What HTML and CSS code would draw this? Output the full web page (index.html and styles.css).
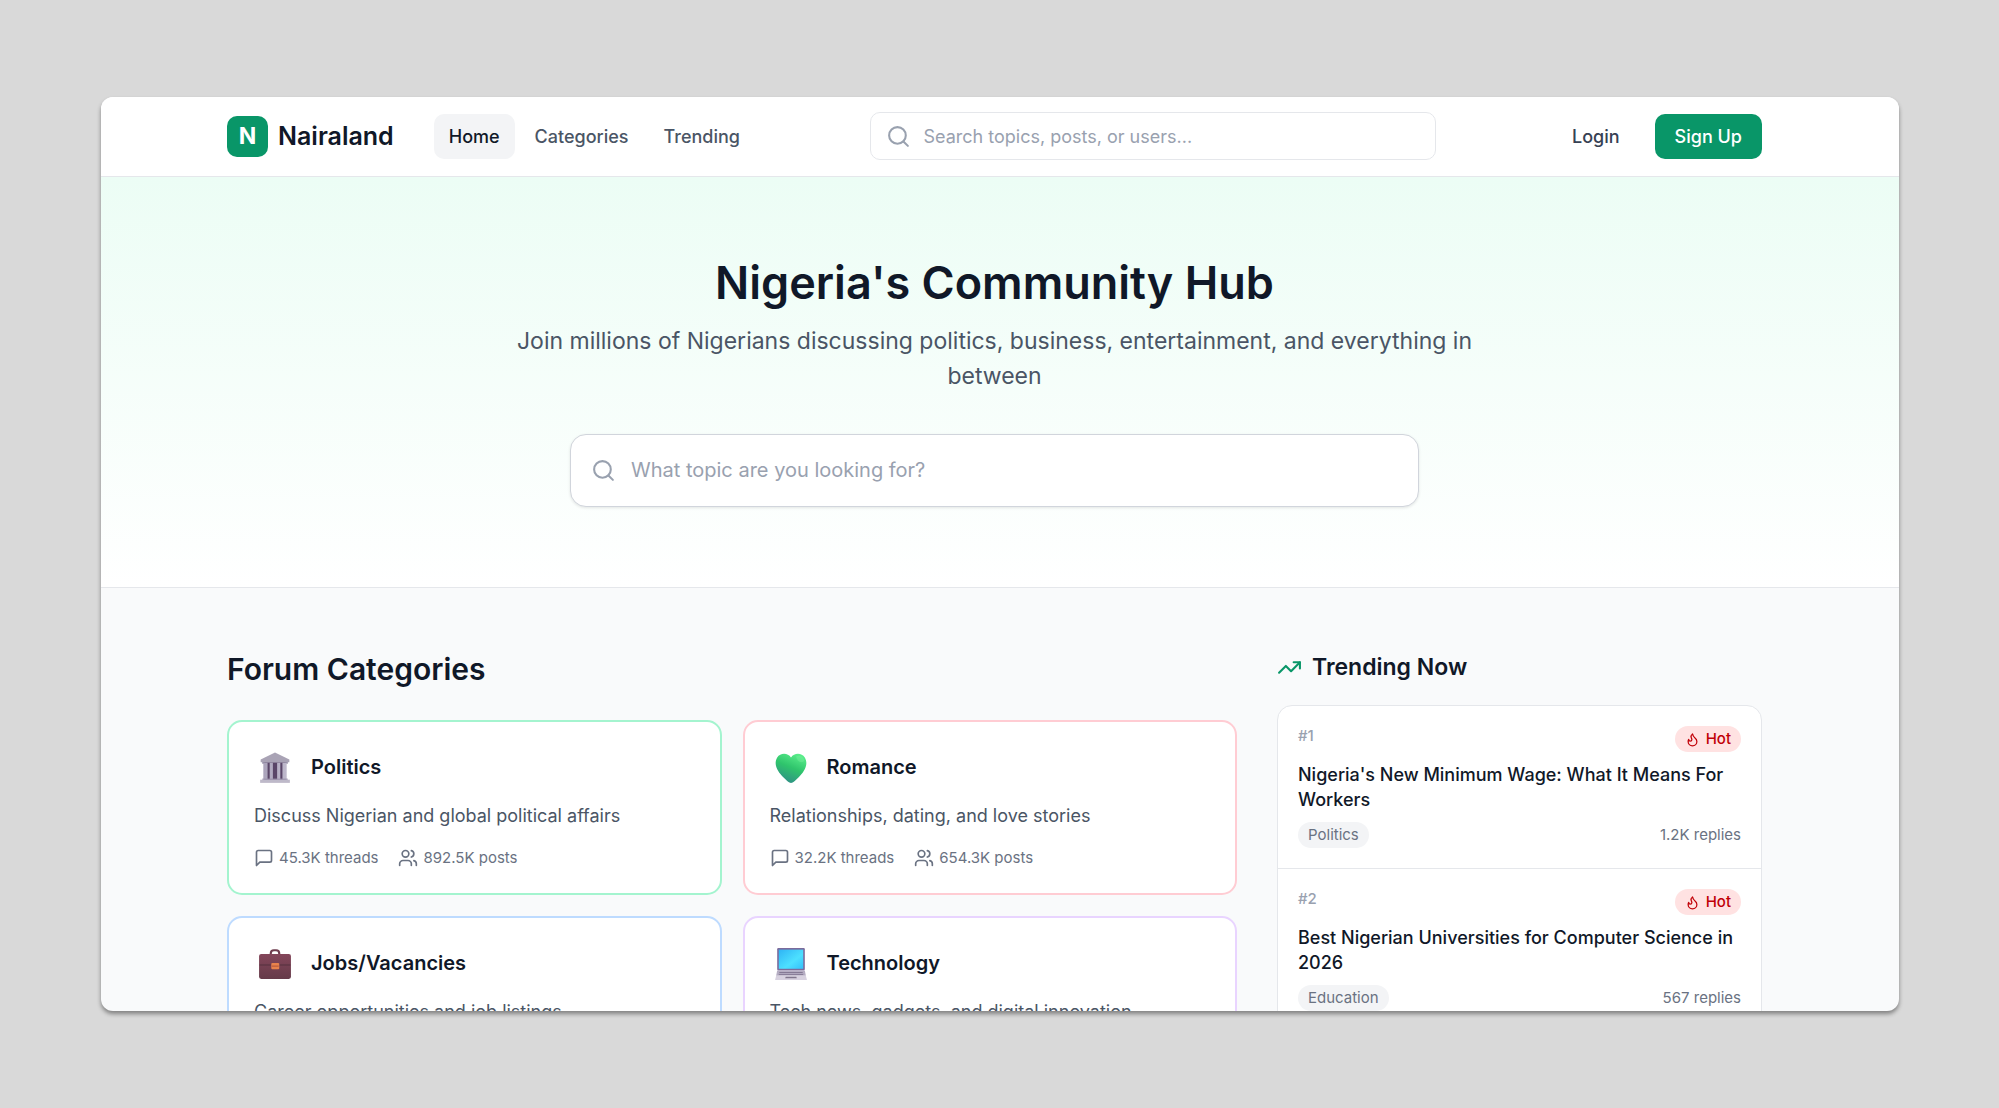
FILE: index.html
```html
<!DOCTYPE html>
<html lang="en">
<head>
<meta charset="utf-8">
<meta name="viewport" content="width=device-width, initial-scale=1">
<title>Nairaland</title>
<link rel="stylesheet" href="styles.css">
</head>
<body>
<svg class="sprite" aria-hidden="true">
  <defs>
    <linearGradient id="heart-fill" x1="0.8" y1="0" x2="0.35" y2="1">
      <stop offset="0" stop-color="#5cf08c"/>
      <stop offset="0.5" stop-color="#2fc46c"/>
      <stop offset="1" stop-color="#2f8f86"/>
    </linearGradient>
    <linearGradient id="screen-fill" x1="0" y1="0" x2="1" y2="1">
      <stop offset="0" stop-color="#2fb4f5"/>
      <stop offset="0.6" stop-color="#4de0ff"/>
      <stop offset="1" stop-color="#35c0fa"/>
    </linearGradient>
    <linearGradient id="case-fill" x1="0" y1="0" x2="0" y2="1">
      <stop offset="0" stop-color="#84465a"/>
      <stop offset="1" stop-color="#653a49"/>
    </linearGradient>
    <linearGradient id="column-fill" x1="0" y1="0" x2="1" y2="0">
      <stop offset="0" stop-color="#aaa3ba"/>
      <stop offset="1" stop-color="#bfb9cc"/>
    </linearGradient>
  </defs>
  <symbol id="search" viewBox="0 0 24 24"><circle cx="11" cy="11" r="8"/><path d="m21 21-4.3-4.3"/></symbol>
  <symbol id="thread" viewBox="0 0 24 24"><path d="M21 15a2 2 0 0 1-2 2H7l-4 4V5a2 2 0 0 1 2-2h14a2 2 0 0 1 2 2z"/></symbol>
  <symbol id="users" viewBox="0 0 24 24"><path d="M16 21v-2a4 4 0 0 0-4-4H6a4 4 0 0 0-4 4v2"/><circle cx="9" cy="7" r="4"/><path d="M22 21v-2a4 4 0 0 0-3-3.87"/><path d="M16 3.13a4 4 0 0 1 0 7.75"/></symbol>
  <symbol id="trend" viewBox="0 0 24 24"><path d="m22 7-8.5 8.5-5-5L2 17"/><path d="M16 7h6v6"/></symbol>
  <symbol id="flame" viewBox="0 0 24 24"><path d="M8.5 14.5A2.5 2.5 0 0 0 11 12c0-1.38-.5-2-1-3-1.072-2.143-.224-4.054 2-6 .5 2.5 2 4.9 4 6.5 2 1.6 3 3.5 3 5.5a7 7 0 1 1-14 0c0-1.153.433-2.294 1-3a2.5 2.5 0 0 0 2.5 2.5z"/></symbol>
</svg>
<div class="window">
  <header class="topbar">
    <div class="container topbar-row">
      <div class="topbar-left">
        <a class="brand" href="#"><span class="brand-mark">N</span>Nairaland</a>
        <nav class="nav">
          <a class="nav-link active" href="#">Home</a>
          <a class="nav-link" href="#">Categories</a>
          <a class="nav-link" href="#">Trending</a>
        </nav>
      </div>
      <label class="search">
        <svg class="icon icon-search"><use href="#search"/></svg>
        <input type="search" aria-label="Search" placeholder="Search topics, posts, or users...">
      </label>
      <div class="actions">
        <button class="btn" type="button">Login</button>
        <button class="btn btn-primary" type="button">Sign Up</button>
      </div>
    </div>
  </header>
  <section class="hero">
    <div class="hero-inner">
      <h1>Nigeria's Community Hub</h1>
      <p>Join millions of Nigerians discussing politics, business, entertainment, and everything in between</p>
      <label class="search search-large">
        <svg class="icon icon-search"><use href="#search"/></svg>
        <input type="search" aria-label="Search by topic" placeholder="What topic are you looking for?">
      </label>
    </div>
  </section>
  <main class="container columns">
    <section class="forum">
      <h2>Forum Categories</h2>
      <div class="cards">
        <article class="card card-green">
          <div class="card-head">
            <svg class="emoji" viewBox="0 0 32 32">
              <path fill="#8e869f" d="M4 9h24v3H4z"/>
              <path fill="#5a4668" d="M6 11h20v16H6z"/>
              <path fill="url(#column-fill)" d="M5 11h4v16H5zm6 0h3v16h-3zm7 0h3v16h-3zm5 0h4v16h-4z"/>
              <path fill="#a9a3b5" d="M16 1.500 2.500 8v2.500h27V8z"/>
              <path fill="#beb9c9" d="M2 27h28v3H2z"/>
              <path fill="#9d94ad" d="M4 26h24v1H4z"/>
            </svg>
            <h3>Politics</h3>
          </div>
          <p>Discuss Nigerian and global political affairs</p>
          <div class="stats">
            <span><svg class="icon"><use href="#thread"/></svg>45.3K threads</span>
            <span><svg class="icon"><use href="#users"/></svg>892.5K posts</span>
          </div>
        </article>
        <article class="card card-rose">
          <div class="card-head">
            <svg class="emoji" viewBox="0 0 32 32">
              <path fill="url(#heart-fill)" d="M16 6C13 1.500 6 1.500 3 6c-4 7 1 14 6 19 2 2 4 4 5.500 4.700q1.500.7 3 0C19 29 21 27 23 25c5-5 10-12 6-19-3-4.500-10-4.500-13 0z"/>
              <path fill="#8af5aa" opacity=".3" d="M21 5c3-1.500 7 0 7.500 4-1 2-4 2-6 0q-2-2-1.500-4z"/>
            </svg>
            <h3>Romance</h3>
          </div>
          <p>Relationships, dating, and love stories</p>
          <div class="stats">
            <span><svg class="icon"><use href="#thread"/></svg>32.2K threads</span>
            <span><svg class="icon"><use href="#users"/></svg>654.3K posts</span>
          </div>
        </article>
        <article class="card card-blue">
          <div class="card-head">
            <svg class="emoji" viewBox="0 0 32 32">
              <path fill="none" stroke="#6e3c4d" stroke-width="2" d="M12 7V6q0-3 3-3h2q3 0 3 3v1"/>
              <rect x="1" y="6.500" width="30" height="23.500" rx="2" fill="url(#case-fill)"/>
              <path fill="none" stroke="#55303e" d="M1.500 17H12m8 0h10.500"/>
              <rect x="12.500" y="15" width="7.500" height="6" rx="1" fill="#e8824c"/>
              <path stroke="#b2553a" d="M13 18h6.500"/>
            </svg>
            <h3>Jobs/Vacancies</h3>
          </div>
          <p>Career opportunities and job listings</p>
          <div class="stats">
            <span><svg class="icon"><use href="#thread"/></svg>28.9K threads</span>
            <span><svg class="icon"><use href="#users"/></svg>445.2K posts</span>
          </div>
        </article>
        <article class="card card-purple">
          <div class="card-head">
            <svg class="emoji" viewBox="0 0 32 32">
              <rect x="3" y="1" width="26" height="21" rx="1" fill="#7b6b9c"/>
              <path fill="url(#screen-fill)" d="M4.500 2.500h23v18h-23z"/>
              <path fill="#b5adc2" d="M3 22h26l1 5H2z"/>
              <path stroke="#7c708c" stroke-width=".8" d="M5 24h22M4.500 25.800h23"/>
              <path fill="#d7d1df" d="M2 27h28l1 4H1z"/>
              <path fill="#81778d" d="M11 28h10l.5 1.500h-11z"/>
            </svg>
            <h3>Technology</h3>
          </div>
          <p>Tech news, gadgets, and digital innovation</p>
          <div class="stats">
            <span><svg class="icon"><use href="#thread"/></svg>21.5K threads</span>
            <span><svg class="icon"><use href="#users"/></svg>387.6K posts</span>
          </div>
        </article>
      </div>
    </section>
    <aside class="trending">
      <h2><svg class="icon icon-trend"><use href="#trend"/></svg>Trending Now</h2>
      <ol class="topics">
        <li class="topic">
          <div class="topic-top"><span class="rank">#1</span><span class="hot"><svg class="icon"><use href="#flame"/></svg>Hot</span></div>
          <h3>Nigeria's New Minimum Wage: What It Means For Workers</h3>
          <div class="topic-meta"><span class="tag">Politics</span><span>1.2K replies</span></div>
        </li>
        <li class="topic">
          <div class="topic-top"><span class="rank">#2</span><span class="hot"><svg class="icon"><use href="#flame"/></svg>Hot</span></div>
          <h3>Best Nigerian Universities for Computer Science in 2026</h3>
          <div class="topic-meta"><span class="tag">Education</span><span>567 replies</span></div>
        </li>
      </ol>
    </aside>
  </main>
</div>
</body>
</html>
```
FILE: styles.css
```css
*, *::before, *::after { box-sizing: border-box; }

:root {
  --ink: #101828;
  --body: #4a5565;
  --muted: #6a7282;
  --faint: #99a1af;
  --line: #e5e7eb;
  --green: #099668;
}

body {
  margin: 0;
  height: 100vh;
  padding: 97px 100px 97px 101px;
  background: #d9d9d9;
  color: var(--ink);
  font-family: Inter, "Liberation Sans", sans-serif;
  font-size: 18px;
  line-height: 25px;
}

h1, h2, h3, p, ol { margin: 0; padding: 0; }
a { color: inherit; text-decoration: none; }
.sprite { position: absolute; width: 0; height: 0; }

.window {
  height: 100%;
  overflow: hidden;
  border-radius: 12px;
  background: #f9fafb;
  box-shadow: 0 3px 4px rgb(0 0 0 / 40%);
}

.container {
  width: 100%;
  max-width: 1546px;
  margin: 0 auto;
  padding-right: 11px;
}

.icon {
  flex: none;
  width: 20px;
  height: 20px;
  fill: none;
  stroke: currentColor;
  stroke-width: 2;
  stroke-linecap: round;
  stroke-linejoin: round;
}

/* Top bar */
.topbar { background: #fff; border-bottom: 1px solid var(--line); }
.topbar-row { display: flex; align-items: center; justify-content: space-between; gap: 40px; height: 79px; padding-bottom: 1px; }
.topbar-left { display: flex; align-items: center; gap: 40px; }
.brand { display: flex; align-items: center; gap: 10px; font-size: 25px; font-weight: 600; }
.brand-mark {
  display: grid;
  place-items: center;
  width: 41px;
  height: 41px;
  border-radius: 10px;
  background: var(--green);
  color: #fff;
  font-size: 23px;
  font-weight: 700;
}
.nav { display: flex; gap: 5px; }
.nav-link { padding: 10px 15px; border-radius: 10px; color: var(--body); font-weight: 500; }
.nav-link.active { background: #f3f4f6; color: var(--ink); }

.search {
  display: flex;
  flex: 0 1 566px;
  align-items: center;
  gap: 12px;
  height: 48px;
  padding: 0 15px;
  border: 1px solid var(--line);
  border-radius: 10px;
  background: #fff;
}
.search input {
  flex: 1;
  min-width: 0;
  padding: 0;
  border: 0;
  outline: 0;
  background: none;
  color: var(--ink);
  font: inherit;
}
.search input::placeholder { color: var(--faint); opacity: 1; }
.icon-search { width: 25px; height: 25px; color: var(--faint); }

.actions { display: flex; gap: 15px; }
.btn {
  padding: 10px 20px;
  border: 0;
  border-radius: 10px;
  background: none;
  color: #364153;
  font: inherit;
  font-weight: 500;
}
.btn-primary { background: var(--green); color: #fff; }

/* Hero */
.hero {
  padding: 80px 11px 80px 0;
  border-bottom: 1px solid var(--line);
  background: linear-gradient(#ecfdf5, #fff);
}
.hero-inner { max-width: 970px; margin: 0 auto; text-align: center; }
.hero h1 { margin-bottom: 16px; font-size: 45px; line-height: 51px; font-weight: 600; }
.hero p { color: var(--body); font-size: 23px; line-height: 35px; }
.search-large {
  max-width: 849px;
  height: 73px;
  margin: 40px auto 0;
  padding: 0 20px;
  gap: 15px;
  border-color: #d1d5dc;
  border-radius: 16px;
  box-shadow: 0 1px 3px rgb(0 0 0 / 10%);
  font-size: 20px;
}

/* Main columns */
.columns { display: grid; grid-template-columns: minmax(0, 1010fr) minmax(0, 485fr); gap: 40px; padding-top: 61px; }
.forum h2 { margin-bottom: 30px; font-size: 30px; line-height: 41px; font-weight: 600; }
.cards { display: grid; grid-template-columns: 1fr 1fr; gap: 21px; }
.card { padding: 25px; border: 2px solid; border-radius: 15px; background: #fff; }
.card-green { border-color: #a4f4cf; }
.card-rose { border-color: #ffccd3; }
.card-blue { border-color: #bedbff; }
.card-purple { border-color: #e9d4ff; }
.card-head { display: flex; align-items: center; gap: 19px; height: 41px; padding-left: 4px; }
.card h3 { font-size: 20px; font-weight: 600; }
.card p { margin: 15px 0 20px; color: var(--body); }
.emoji { width: 34px; height: 34px; }
.stats { display: flex; gap: 20px; color: var(--muted); font-size: 15px; line-height: 20px; }
.stats span { display: flex; align-items: center; gap: 5px; }

/* Trending */
.trending h2 { display: flex; align-items: center; gap: 10px; margin-bottom: 20px; font-size: 23px; line-height: 36px; font-weight: 600; }
.icon-trend { width: 25px; height: 25px; color: var(--green); }
.topics { overflow: hidden; border: 1px solid var(--line); border-radius: 15px; background: #fff; list-style: none; }
.topic { padding: 20px; }
.topic + .topic { border-top: 1px solid var(--line); }
.topic-top, .topic-meta { display: flex; justify-content: space-between; font-size: 15px; line-height: 20px; }
.topic-meta { align-items: center; color: var(--muted); }
.rank { color: var(--faint); font-weight: 500; }
.hot { display: flex; align-items: center; gap: 6px; padding: 3px 10px; border-radius: 13px; background: #ffe2e2; color: #c10007; font-weight: 500; }
.hot .icon { width: 15px; height: 15px; }
.topic h3 { margin: 10px 0; font-size: 18px; font-weight: 500; }
.tag { padding: 3px 10px; border-radius: 13px; background: #f3f4f6; }
```
